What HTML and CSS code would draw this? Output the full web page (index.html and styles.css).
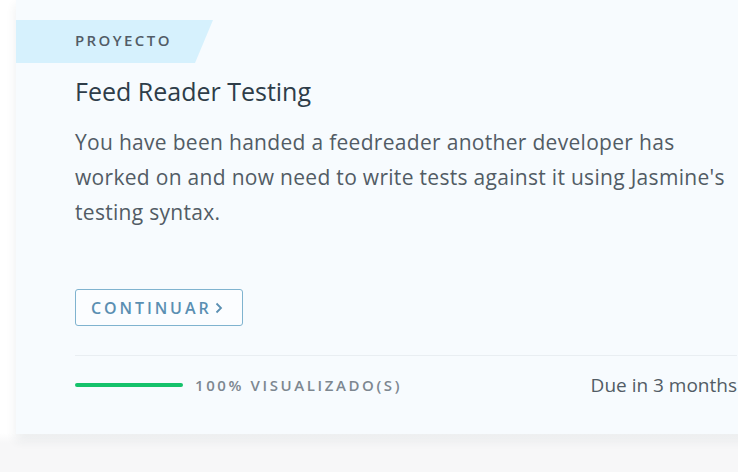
FILE: index.html
```html
<!DOCTYPE html>
<html>
<head>
<meta charset="utf-8">
<link rel="stylesheet" href="styles.css">
</head>
<body>
<div class="page">
  <div class="card">
    <div class="tag">PROYECTO</div>
    <div class="content">
      <h2 class="title">Feed Reader Testing</h2>
      <p class="desc">You have been handed a feedreader another developer has worked on and now need to write tests against it using Jasmine's testing syntax.</p>
      <a class="btn" href="#">CONTINUAR<svg class="chev" width="8" height="12" viewBox="0 0 8 12"><path d="M1.5 1.5 L6 6 L1.5 10.5" fill="none" stroke="currentColor" stroke-width="1.8"/></svg></a>
      <div class="footer">
        <div class="progress"><div class="bar"></div><span class="label">100% VISUALIZADO(S)</span></div>
        <div class="due">Due in 3 months</div>
      </div>
    </div>
  </div>
</div>
</body>
</html>
```

FILE: styles.css
```css
html, body {
  margin: 0;
  padding: 0;
  background: #ffffff;
  overflow: hidden;
  width: 738px;
  height: 473px;
}
.page {
  padding-left: 16px;
  background: linear-gradient(#ffffff 0, #ffffff 434px, #f7f7f8 444px);
  height: 473px;
  font-family: "Open Sans", "Liberation Sans", sans-serif;
}
.card {
  width: 780px;
  background: #f7fbfe;
  padding-top: 20px;
  box-shadow: 0 6px 10px rgba(46, 61, 73, 0.09);
  border-top: 1px solid #eef2f5;
  margin-top: -1px;
}
.tag {
  width: 138px;
  height: 43px;
  padding-left: 59px;
  background: #d6f1fd;
  clip-path: polygon(0 0, 100% 0, 179px 100%, 0 100%);
  color: #525c66;
  font-size: 15px;
  font-weight: 600;
  letter-spacing: 2.4px;
  line-height: 41px;
}
.content {
  padding: 0 59px 0 59px;
}
.title {
  margin: 10px 0 0 0;
  font-size: 25px;
  font-weight: 400;
  color: #2e3d49;
  line-height: 36px;
}
.desc {
  margin: 16px 0 0 0;
  font-size: 21px;
  letter-spacing: 0.3px;
  line-height: 35px;
  color: #525c65;
  width: 665px;
}
.btn {
  display: inline-flex;
  align-items: center;
  gap: 5px;
  margin-top: 59px;
  height: 35px;
  padding: 0 19px 0 15px;
  border: 1.5px solid #7fb3cf;
  border-radius: 3px;
  background: #fbfdff;
  color: #5a8fb2;
  text-decoration: none;
  font-size: 16px;
  font-weight: 600;
  letter-spacing: 2.9px;
}
.chev { margin-left: -2px; }
.footer {
  margin-top: 29px;
  border-top: 1px solid #e9eef2;
  padding: 16px 0 36px 0;
  display: flex;
  align-items: center;
  justify-content: space-between;
}
.progress {
  display: flex;
  align-items: center;
  gap: 12px;
}
.bar {
  width: 108px;
  height: 4px;
  border-radius: 2px;
  background: #15c26b;
}
.label {
  font-size: 15px;
  font-weight: 600;
  letter-spacing: 2.6px;
  color: #7d8790;
}
.due {
  font-size: 19px;
  color: #525c65;
}
```
